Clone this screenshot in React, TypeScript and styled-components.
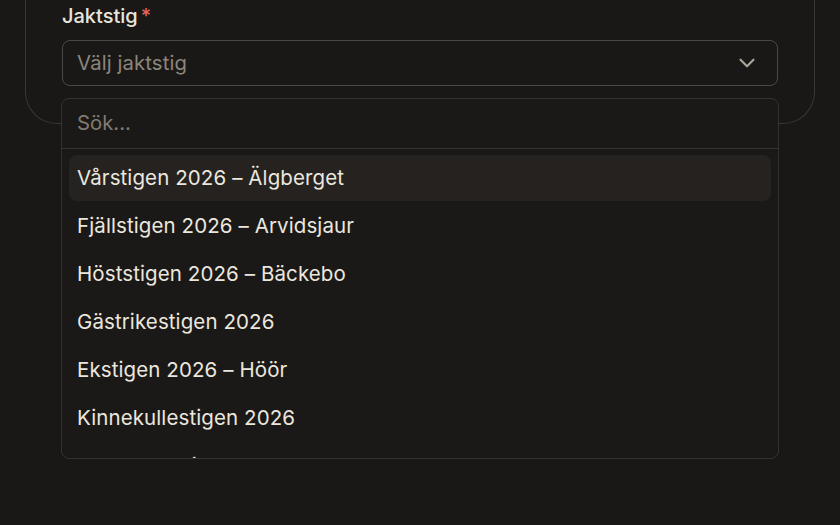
import React, { FunctionComponent } from "react";
import styled, { createGlobalStyle } from "styled-components";
import { ChevronDown } from "lucide-react";

const GlobalStyle = createGlobalStyle`
  html, body {
    margin: 0;
    padding: 0;
    background: #1a1816;
    font-family: Inter, "Noto Sans", sans-serif;
    -webkit-font-smoothing: antialiased;
  }
`;

const Page = styled.div`
  width: 840px;
  height: 525px;
  padding: 0 25px;
  box-sizing: border-box;
  overflow: hidden;
`;

const Card = styled.section`
  border: 1px solid #3a3631;
  border-top: none;
  border-radius: 0 0 32px 32px;
  padding: 3px 36px 37px;
`;

const Label = styled.div`
  color: #e9e5dd;
  font-size: 20px;
  font-weight: 500;
  line-height: 26px;
  margin-bottom: 11px;
`;

const Required = styled.span`
  color: #e0655a;
  margin-left: 3px;
`;

const SelectWrap = styled.div`
  position: relative;
`;

const Trigger = styled.div`
  height: 46px;
  box-sizing: border-box;
  border: 1.5px solid #4d4942;
  border-radius: 8px;
  display: flex;
  align-items: center;
  justify-content: space-between;
  padding: 0 17px 1px 14px;
  color: #8c867c;
  font-size: 20.3px;
  letter-spacing: 0.1px;
`;

const Popover = styled.div`
  position: absolute;
  top: 58px;
  left: -1px;
  right: -1px;
  height: 361px;
  box-sizing: border-box;
  border: 1.5px solid #35322d;
  border-radius: 8px;
  background: #1b1917;
  overflow: hidden;
  display: flex;
  flex-direction: column;
`;

const Search = styled.div`
  height: 50px;
  flex-shrink: 0;
  box-sizing: border-box;
  border-bottom: 1.5px solid #35322d;
  display: flex;
  align-items: center;
  padding: 0 15px 2px;
  color: #817b72;
  font-size: 20.3px;
`;

const List = styled.div`
  padding: 6px 7px 0;
  display: flex;
  flex-direction: column;
  gap: 2px;
`;

const Option = styled.div<{ $active?: boolean }>`
  height: 46px;
  flex-shrink: 0;
  display: flex;
  align-items: center;
  padding: 0 8px 1px;
  box-sizing: border-box;
  border-radius: 8px;
  background: ${(p) => (p.$active ? "#25221f" : "transparent")};
  color: #ebe7df;
  font-size: 20.5px;
  letter-spacing: 0.1px;
`;

const trails = [
  "Vårstigen 2026 – Älgberget",
  "Fjällstigen 2026 – Arvidsjaur",
  "Höststigen 2026 – Bäckebo",
  "Gästrikestigen 2026",
  "Ekstigen 2026 – Höör",
  "Kinnekullestigen 2026",
  "Bergslagsstigen 2026",
];

const App: FunctionComponent = () => {
  return (
    <Page>
      <GlobalStyle />
      <Card>
        <Label>
          Jaktstig<Required>*</Required>
        </Label>
        <SelectWrap>
          <Trigger>
            <span>Välj jaktstig</span>
            <ChevronDown size={26} color="#aaa499" strokeWidth={2} />
          </Trigger>
          <Popover>
            <Search>Sök...</Search>
            <List>
              {trails.map((t, idx) => (
                <Option key={idx} $active={idx === 0}>
                  {t}
                </Option>
              ))}
            </List>
          </Popover>
        </SelectWrap>
      </Card>
    </Page>
  );
};

export default App;
